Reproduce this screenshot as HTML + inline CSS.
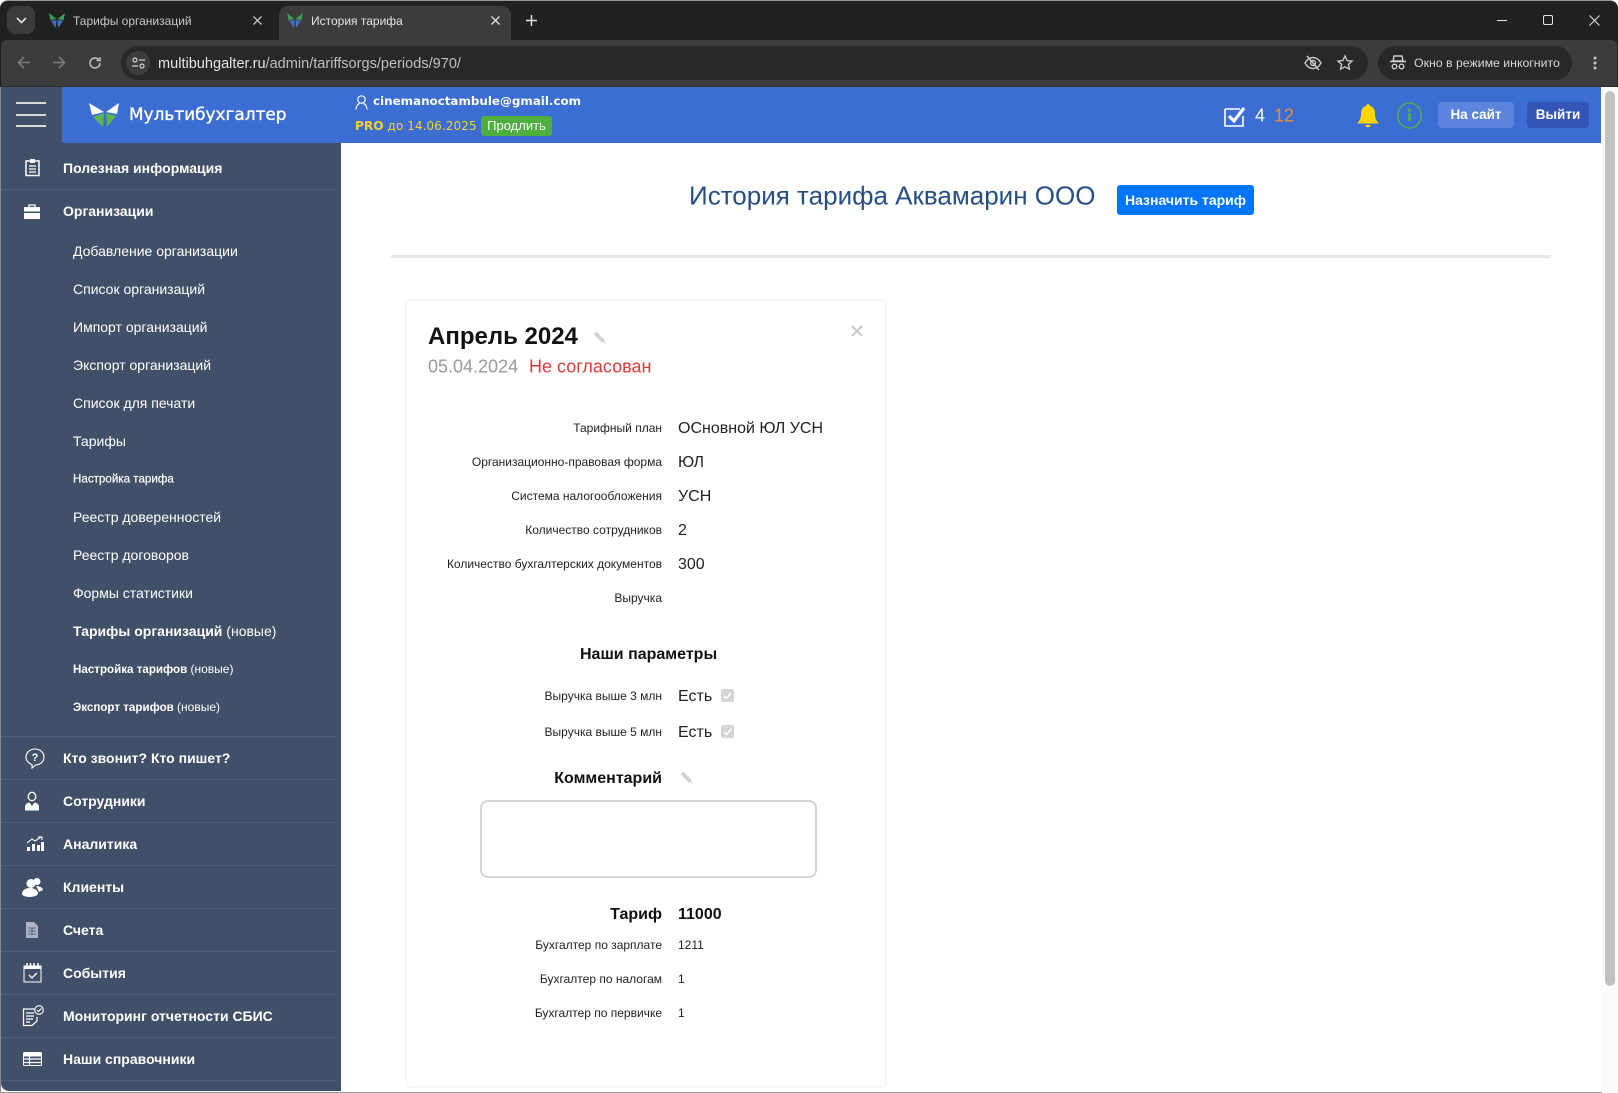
<!DOCTYPE html>
<html lang="ru"><head><meta charset="utf-8"><title>История тарифа</title>
<style>
*{box-sizing:border-box}
html,body{margin:0;padding:0;width:1618px;height:1093px;overflow:hidden;background:#fff;font-family:"Liberation Sans",Arial,sans-serif}
.a{position:absolute;white-space:nowrap}
.c{transform:translateY(-50%)}
svg{position:absolute;overflow:visible}
.tb{color:#c4c7c5;font-size:12px}
.m{left:63px;color:#fff;font-weight:700;font-size:14px;transform:translateY(-50%)}
.s{left:73px;color:#fff;font-size:14px;transform:translateY(-50%)}
.s2{left:73px;color:#fff;font-size:11.6px;transform:translateY(-50%)}
.d{position:absolute;left:1px;width:335px;height:1px;background:#515e79}
.l{right:956px;font-size:12px;color:#222;transform:translateY(-50%)}
.v{left:678px;font-size:16px;color:#222;transform:translateY(-50%)}
.v2{left:678px;font-size:12px;color:#222;transform:translateY(-50%)}
.cb{position:absolute;width:13px;height:13px;background:#d5d5d5;border-radius:2px}
</style></head><body>
<!-- browser chrome -->
<div class="a" style="left:0;top:0;width:1618px;height:87px;background:#202221;border-top:1px solid #999;border-radius:8px 8px 0 0"></div>
<div class="a" style="left:1px;top:40px;width:1616px;height:47px;background:#3c3c3c;border-bottom:1px solid #2e2e2e;border-radius:6px 6px 0 0"></div>
<div class="a" style="left:7px;top:6px;width:28px;height:28px;background:#3a3b3a;border-radius:8px"></div>
<svg style="left:16px;top:17px" width="11" height="7" viewBox="0 0 11 7"><path d="M1 1l4.500 4.500L10 1" fill="none" stroke="#e3e3e3" stroke-width="1.600"/></svg>
<svg style="left:49px;top:13px" width="16" height="15" viewBox="0 0 30 28"><path d="M0 0L14 11L3 14Z M30 0L16 11L27 14Z" fill="#3f9a57"/><path d="M4 15L14 13L13 28Z M26 15L16 13L17 28Z" fill="#3f6fc6"/></svg>
<div class="a c tb" style="left:73px;top:21px">Тарифы организаций</div>
<svg style="left:253px;top:16px" width="9" height="9" viewBox="0 0 9 9"><path d="M.5.5l8 8M8.500.5l-8 8" stroke="#c4c7c5" stroke-width="1.300"/></svg>
<div class="a" style="left:279px;top:6px;width:232px;height:34px;background:#3c3c3c;border-radius:9px 9px 0 0"></div>
<svg style="left:287px;top:13px" width="16" height="15" viewBox="0 0 30 28"><path d="M0 0L14 11L3 14Z M30 0L16 11L27 14Z" fill="#3f9a57"/><path d="M4 15L14 13L13 28Z M26 15L16 13L17 28Z" fill="#3f6fc6"/></svg>
<div class="a c tb" style="left:311px;top:21px;color:#e3e3e3">История тарифа</div>
<svg style="left:491px;top:16px" width="9" height="9" viewBox="0 0 9 9"><path d="M.5.5l8 8M8.500.5l-8 8" stroke="#e3e3e3" stroke-width="1.300"/></svg>
<svg style="left:526px;top:15px" width="11" height="11" viewBox="0 0 11 11"><path d="M5.500 0v11M0 5.500h11" stroke="#e3e3e3" stroke-width="1.500"/></svg>
<svg style="left:1497px;top:20px" width="10" height="2"><path d="M0 .5h10" stroke="#e3e3e3"/></svg>
<svg style="left:1543px;top:15px" width="10" height="10"><rect x=".5" y=".5" width="9" height="9" rx="1.500" fill="none" stroke="#e3e3e3"/></svg>
<svg style="left:1589px;top:15px" width="11" height="11"><path d="M.5.5l10 10M10.500.5l-10 10" stroke="#e3e3e3"/></svg>
<!-- toolbar -->
<svg style="left:17px;top:56px" width="14" height="13" viewBox="0 0 14 13"><path d="M13 6.500H2M7 1L1.500 6.500L7 12" fill="none" stroke="#7d7f7e" stroke-width="1.500"/></svg>
<svg style="left:52px;top:56px" width="14" height="13" viewBox="0 0 14 13"><path d="M1 6.500H12M7 1l5.500 5.500L7 12" fill="none" stroke="#7d7f7e" stroke-width="1.500"/></svg>
<svg style="left:88px;top:56px" width="14" height="14" viewBox="0 0 14 14"><path d="M12 7a5 5 0 1 1-1.500-3.600M12 1v3.500H8.500" fill="none" stroke="#c4c7c5" stroke-width="1.500"/></svg>
<div class="a" style="left:121px;top:46px;width:1247px;height:34px;background:#282828;border-radius:17px"></div>
<div class="a" style="left:126px;top:51px;width:24px;height:24px;background:#3c3c3c;border-radius:12px"></div>
<svg style="left:132px;top:57px" width="13" height="12" viewBox="0 0 13 12"><circle cx="3" cy="3" r="2" fill="none" stroke="#d0d0d0" stroke-width="1.200"/><path d="M7 3h6M0 9h6" stroke="#d0d0d0" stroke-width="1.200"/><circle cx="10" cy="9" r="2" fill="none" stroke="#d0d0d0" stroke-width="1.200"/></svg>
<div class="a c" style="left:158px;top:64px;font-size:14.55px;color:#e3e3e3">multibuhgalter.ru<span style="color:#bdbfbe">/admin/tariffsorgs/periods/970/</span></div>
<svg style="left:1304px;top:55px" width="18" height="16" viewBox="0 0 18 16"><path d="M1 8c2-3.500 5-5.500 8-5.500S15 4.500 17 8c-2 3.500-5 5.500-8 5.500S3 11.500 1 8z" fill="none" stroke="#c4c7c5" stroke-width="1.400"/><circle cx="9" cy="8" r="2.500" fill="none" stroke="#c4c7c5" stroke-width="1.400"/><path d="M3 1l12 14" stroke="#c4c7c5" stroke-width="1.500"/></svg>
<svg style="left:1337px;top:55px" width="16" height="15" viewBox="0 0 16 15"><path d="M8 1l2.100 4.500 4.900.6-3.600 3.300 1 4.800L8 11.800l-4.400 2.400 1-4.800L1 6.100l4.900-.6z" fill="none" stroke="#c4c7c5" stroke-width="1.400"/></svg>
<div class="a" style="left:1378px;top:46px;width:194px;height:34px;background:#282828;border-radius:17px"></div>
<svg style="left:1390px;top:55px" width="16" height="15" viewBox="0 0 16 15"><path d="M4 1h8l1 5H3zM0 6.500h16" fill="none" stroke="#d0d0d0" stroke-width="1.400"/><circle cx="4.500" cy="11.500" r="2.300" fill="none" stroke="#d0d0d0" stroke-width="1.400"/><circle cx="11.500" cy="11.500" r="2.300" fill="none" stroke="#d0d0d0" stroke-width="1.400"/></svg>
<div class="a c" style="left:1414px;top:63px;font-size:12.3px;color:#d6d6d6">Окно в режиме инкогнито</div>
<svg style="left:1593px;top:56px" width="4" height="14"><circle cx="2" cy="2" r="1.500" fill="#c4c7c5"/><circle cx="2" cy="7" r="1.500" fill="#c4c7c5"/><circle cx="2" cy="12" r="1.500" fill="#c4c7c5"/></svg>
<!-- header -->
<div class="a" style="left:1px;top:87px;width:61px;height:56px;background:#424f69"></div>
<div class="a" style="left:62px;top:87px;width:1539px;height:56px;background:#3b6dd2"></div>
<div class="a" style="left:16px;top:102px;width:30px;height:2px;background:#d8d8d8"></div>
<div class="a" style="left:16px;top:114px;width:30px;height:2px;background:#d8d8d8"></div>
<div class="a" style="left:16px;top:125px;width:30px;height:2px;background:#d8d8d8"></div>
<svg style="left:89px;top:102px" width="30" height="26" viewBox="0 0 30 26"><path d="M0 1L15 10L3 13Z M30 1L17 10L28 12Z" fill="#fff"/><path d="M4 15L15 11L14 25Z M27 14L17 11L18 25Z" fill="#5cb54a"/></svg>
<div class="a c" style="left:129px;top:114px;font-size:16.9px;font-family:'DejaVu Sans',sans-serif;color:#fff;-webkit-text-stroke:.35px #fff">Мультибухгалтер</div>
<svg style="left:355px;top:95px" width="13" height="15" viewBox="0 0 13 15"><circle cx="6.500" cy="4.500" r="3.700" fill="none" stroke="#fff" stroke-width="1.200"/><path d="M1 14.500c0-3.500 2-5.500 3.500-6M12 14.500c0-3.500-2-5.500-3.500-6" fill="none" stroke="#fff" stroke-width="1.200"/></svg>
<div class="a c" style="left:373px;top:100.5px;font-size:11.9px;font-weight:700;font-family:'DejaVu Sans',sans-serif;color:#fff">cinemanoctambule@gmail.com</div>
<div class="a c" style="left:355px;top:126px;font-size:12.15px;font-family:'DejaVu Sans',sans-serif;color:#f5d327"><b>PRO</b> до 14.06.2025</div>
<div class="a" style="left:481px;top:116px;width:71px;height:20px;background:#4caf3e;border-radius:3px;color:#fff;font-size:13px;line-height:20px;text-align:center">Продлить</div>
<svg style="left:1224px;top:106px" width="22" height="21" viewBox="0 0 22 21"><path d="M1 3h15M1 3v17h18V10" fill="none" stroke="#fff" stroke-width="1.600"/><path d="M5 10l5 5L20 2" fill="none" stroke="#fff" stroke-width="3.200"/></svg>
<div class="a c" style="left:1255px;top:116px;font-size:18px;color:#fff">4</div>
<div class="a c" style="left:1274px;top:116px;font-size:18px;color:#ec8b36">12</div>
<svg style="left:1357px;top:104px" width="22" height="24" viewBox="0 0 22 24"><path d="M11 0c1 0 1.500.7 1.500 1.700C16 2.500 18 5.500 18 9.500c0 5 1.500 7.500 4 10H0c2.500-2.500 4-5 4-10 0-4 2-7 5.500-7.800C9.500.7 10 0 11 0z" fill="#ffd600"/><path d="M8 21h6c-.5 1.500-1.500 2.300-3 2.300S8.500 22.500 8 21z" fill="#ffd600"/></svg>
<svg style="left:1397px;top:101px" width="25" height="30" viewBox="0 0 25 30"><ellipse cx="12.500" cy="12.500" rx="11.700" ry="12.500" fill="none" stroke="#4caf50" stroke-width="1.500" transform="translate(0,2)"/><circle cx="12.500" cy="9" r="1.600" fill="#4caf50"/><path d="M12.500 12v8" stroke="#4caf50" stroke-width="2.800"/></svg>
<div class="a" style="left:1438px;top:102px;width:76px;height:26px;background:#5b85dd;border-radius:4px;color:#fff;font-size:13.5px;font-weight:700;line-height:26px;text-align:center">На сайт</div>
<div class="a" style="left:1527px;top:102px;width:62px;height:26px;background:#3455b8;border-radius:4px;color:#fff;font-size:13.5px;font-weight:700;line-height:26px;text-align:center">Выйти</div>
<!-- scrollbar -->
<div class="a" style="left:1602px;top:87px;width:16px;height:1006px;background:#fbfbfb"></div>
<div class="a" style="left:1605px;top:91px;width:10px;height:895px;background:#c1c1c1;border-radius:5px"></div>
<!-- sidebar -->
<div class="a" style="left:1px;top:143px;width:340px;height:948px;background:#424f69;border-radius:0 0 0 8px"></div>
<div class="a" style="left:0;top:87px;width:1px;height:1006px;background:#8a8a8a"></div>
<div class="d" style="top:189px"></div><div class="d" style="top:736px"></div><div class="d" style="top:779px"></div><div class="d" style="top:822px"></div><div class="d" style="top:865px"></div><div class="d" style="top:908px"></div><div class="d" style="top:951px"></div><div class="d" style="top:994px"></div><div class="d" style="top:1037px"></div><div class="d" style="top:1080px"></div>
<div class="a m" style="top:168px">Полезная информация</div>
<div class="a m" style="top:211px">Организации</div>
<div class="a s" style="top:251px">Добавление организации</div>
<div class="a s" style="top:289px">Список организаций</div>
<div class="a s" style="top:327px">Импорт организаций</div>
<div class="a s" style="top:365px">Экспорт организаций</div>
<div class="a s" style="top:403px">Список для печати</div>
<div class="a s" style="top:441px">Тарифы</div>
<div class="a s2" style="top:479px;-webkit-text-stroke:.2px #fff">Настройка тарифа</div>
<div class="a s" style="top:517px">Реестр доверенностей</div>
<div class="a s" style="top:555px">Реестр договоров</div>
<div class="a s" style="top:593px">Формы статистики</div>
<div class="a s" style="top:631px"><b>Тарифы организаций</b> (новые)</div>
<div class="a s2" style="top:669px"><b>Настройка тарифов</b> <span style="font-size:12px">(новые)</span></div>
<div class="a s2" style="top:707px"><b>Экспорт тарифов</b> <span style="font-size:12px">(новые)</span></div>
<div class="a m" style="top:758px">Кто звонит? Кто пишет?</div>
<div class="a m" style="top:801px">Сотрудники</div>
<div class="a m" style="top:844px">Аналитика</div>
<div class="a m" style="top:887px">Клиенты</div>
<div class="a m" style="top:930px">Счета</div>
<div class="a m" style="top:973px">События</div>
<div class="a m" style="top:1016px">Мониторинг отчетности СБИС</div>
<div class="a m" style="top:1059px">Наши справочники</div>
<!-- sidebar icons -->
<svg style="left:25px;top:158px" width="15" height="18" viewBox="0 0 15 18"><path d="M1 3h13v14.500H1z" fill="none" stroke="#fff" stroke-width="1.500"/><path d="M5 1h5v4H5z" fill="#fff"/><path d="M4 8h7M4 11h7M4 14h7" stroke="#fff" stroke-width="1.300"/></svg>
<svg style="left:24px;top:204px" width="16" height="15" viewBox="0 0 16 15"><path d="M5 3V1h6v2" fill="none" stroke="#fff" stroke-width="1.200"/><path d="M0 3h16v4.500H0zM0 9h16v6H0z" fill="#fff"/></svg>
<svg style="left:25px;top:748px" width="20" height="20" viewBox="0 0 20 20"><path d="M10 1c5 0 9 3.500 9 8s-4 8-8.500 8L7 20v-3.500C3.500 15.500 1 12.500 1 9c0-4.500 4-8 9-8z" fill="none" stroke="#fff" stroke-width="1.100"/><text x="10" y="13" font-size="11" font-weight="700" fill="#fff" text-anchor="middle" font-family="Liberation Sans">?</text></svg>
<svg style="left:25px;top:792px" width="14" height="19" viewBox="0 0 14 19"><ellipse cx="7" cy="4.500" rx="3.800" ry="4.200" fill="none" stroke="#fff" stroke-width="1.300"/><path d="M0 18.500v-4c0-2 2-3.500 4.500-4L7 14l2.500-3.500c2.500.5 4.500 2 4.500 4v4z" fill="#fff"/></svg>
<svg style="left:26px;top:836px" width="18" height="15" viewBox="0 0 18 15"><path d="M1 7l5-4 3 2 6-4M12 1h4v3" fill="none" stroke="#fff" stroke-width="1.100"/><path d="M1 11h3v4H1zM6 8h3v7H6zM11 9h3v6h-3zM15 6h3v9h-3z" fill="#fff"/></svg>
<svg style="left:22px;top:877px" width="21" height="20" viewBox="0 0 21 20"><circle cx="9" cy="6.500" r="4.500" fill="#fff"/><path d="M0 17c0-4 4-6 8-6s8 2 8 5.500c0 1.500-3.500 3.500-8 3.500S0 18.500 0 17z" fill="#fff"/><circle cx="15" cy="4.500" r="3.500" fill="#fff"/><path d="M14 9c4 0 7 2 7 4l-4 2c-.5-2-2-4-3-6z" fill="#fff"/></svg>
<svg style="left:26px;top:922px" width="12" height="16" viewBox="0 0 12 16"><path d="M0 0h8l4 4v12H0z" fill="#aeb4c0"/><path d="M2 6h8M2 9h8M2 12h8M6 6v7" stroke="#424f69" stroke-width=".8"/></svg>
<svg style="left:23px;top:962px" width="19" height="21" viewBox="0 0 19 21"><path d="M1 4h17v16H1z" fill="none" stroke="#fff" stroke-width="1"/><path d="M1 4h17v3H1z" fill="#fff"/><path d="M4 1v5M7.500 1v5M11 1v5M15 1v5" stroke="#fff" stroke-width="1.500"/><path d="M6 13l3 3 5-5" fill="none" stroke="#fff" stroke-width="1.300"/></svg>
<svg style="left:22px;top:1005px" width="22" height="22" viewBox="0 0 22 22"><path d="M13 4H1.500v16.500H10L15 16v-4" fill="none" stroke="#fff" stroke-width="1.200"/><path d="M4 8h8M4 11h8M4 14h7M4 17h4" stroke="#fff" stroke-width="1.200"/><circle cx="17" cy="5" r="4.300" fill="none" stroke="#fff" stroke-width="1.100"/><path d="M15 5l1.500 1.500L19.500 3.500" fill="none" stroke="#fff" stroke-width="1.100"/></svg>
<svg style="left:23px;top:1052px" width="19" height="14" viewBox="0 0 19 14"><rect x=".5" y=".5" width="18" height="13" rx="1" fill="none" stroke="#fff"/><path d="M0 1h19v3.500H0z" fill="#fff"/><path d="M0 7h19M0 10.500h19M6.500 4v10" stroke="#fff" stroke-width="1.200"/></svg>
<!-- main -->
<div class="a c" style="left:689px;top:196px;font-size:26px;color:#254f82">История тарифа Аквамарин ООО</div>
<div class="a" style="left:1117px;top:185px;width:137px;height:30px;background:#0275ff;border-radius:3px;color:#fff;font-size:14px;font-weight:700;line-height:30px;text-align:center">Назначить тариф</div>
<div class="a" style="left:391px;top:255px;width:1160px;height:3px;background:#e5e5e5"></div>
<div class="a" style="left:407px;top:301px;width:478px;height:785px;background:#fff;border-radius:3px;box-shadow:0 0 3px rgba(0,0,0,.14)"></div>
<div class="a c" style="left:428px;top:337px;font-size:24px;font-weight:700;color:#111">Апрель 2024</div>
<svg style="left:593px;top:331px" width="13" height="13" viewBox="0 0 13 13"><path d="M2 2l8.500 8.500" stroke="#d2d2d2" stroke-width="3.800"/><path d="M10 10l2.500 2.500" stroke="#d2d2d2" stroke-width="1.200"/></svg>
<svg style="left:851px;top:325px" width="12" height="12" viewBox="0 0 12 12"><path d="M1 1l10 10M11 1L1 11" stroke="#c9c9c9" stroke-width="2"/></svg>
<div class="a c" style="left:428px;top:367px;font-size:18px;color:#999">05.04.2024</div>
<div class="a c" style="left:529px;top:367px;font-size:18px;color:#de3a3a">Не согласован</div>
<div class="a l" style="top:428px">Тарифный план</div><div class="a v" style="top:428.500px">ОСновной ЮЛ УСН</div>
<div class="a l" style="top:462px">Организационно-правовая форма</div><div class="a v" style="top:462.500px">ЮЛ</div>
<div class="a l" style="top:496px">Система налогообложения</div><div class="a v" style="top:496.500px">УСН</div>
<div class="a l" style="top:530px">Количество сотрудников</div><div class="a v" style="top:530.500px">2</div>
<div class="a l" style="top:564px">Количество бухгалтерских документов</div><div class="a v" style="top:564.500px">300</div>
<div class="a l" style="top:598px">Выручка</div>
<div class="a c" style="left:580px;top:655px;font-size:16px;font-weight:700;color:#111">Наши параметры</div>
<div class="a l" style="top:696px">Выручка выше 3 млн</div><div class="a v" style="top:697px">Есть</div>
<div class="cb" style="left:721px;top:689px"></div><svg style="left:723px;top:692px" width="9" height="8"><path d="M1 4l2.500 2.500L8 1" fill="none" stroke="#fff" stroke-width="1.500"/></svg>
<div class="a l" style="top:732px">Выручка выше 5 млн</div><div class="a v" style="top:733px">Есть</div>
<div class="cb" style="left:721px;top:725px"></div><svg style="left:723px;top:728px" width="9" height="8"><path d="M1 4l2.500 2.500L8 1" fill="none" stroke="#fff" stroke-width="1.500"/></svg>
<div class="a" style="right:956px;top:779px;font-size:16px;font-weight:700;color:#111;transform:translateY(-50%)">Комментарий</div>
<svg style="left:680px;top:771px" width="13" height="13" viewBox="0 0 13 13"><path d="M2 2l8.500 8.500" stroke="#d2d2d2" stroke-width="3.800"/><path d="M10 10l2.500 2.500" stroke="#d2d2d2" stroke-width="1.200"/></svg>
<div class="a" style="left:480px;top:800px;width:337px;height:78px;border:2px solid #d4d4d4;border-radius:8px;background:#fff"></div>
<div class="a" style="right:956px;top:915px;font-size:16px;font-weight:700;color:#111;transform:translateY(-50%)">Тариф</div>
<div class="a v" style="top:915px;font-weight:700;color:#111">11000</div>
<div class="a l" style="top:945px">Бухгалтер по зарплате</div><div class="a v2" style="top:945px">1211</div>
<div class="a l" style="top:979px">Бухгалтер по налогам</div><div class="a v2" style="top:979px">1</div>
<div class="a l" style="top:1013px">Бухгалтер по первичке</div><div class="a v2" style="top:1013px">1</div>
<div class="a" style="left:0;top:1092px;width:1602px;height:1px;background:#999"></div>
</body></html>
